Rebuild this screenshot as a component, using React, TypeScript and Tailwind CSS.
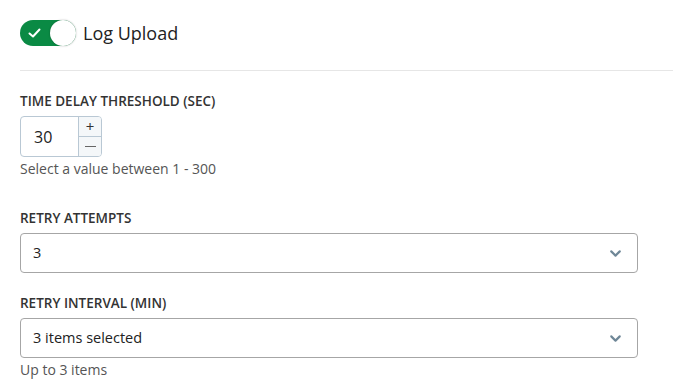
import React from 'react';
import { ChevronDown } from 'lucide-react';

const Label: React.FC<{ children: React.ReactNode; className?: string }> = ({ children, className = '' }) => (
  <div className={`text-[13.5px] leading-[18px] font-semibold text-[#333333] ${className}`}>{children}</div>
);

const Select: React.FC<{ value: string }> = ({ value }) => (
  <div className="mt-[6px] h-[40px] w-[618px] flex items-center justify-between rounded-[4px] border border-[#a6a6a6] bg-white pl-[12px] pr-[13px]">
    <span className="text-[14.5px] text-[#222222]">{value}</span>
    <ChevronDown className="w-[17px] h-[17px] text-[#6f8797]" strokeWidth={3} />
  </div>
);

export default function App() {
  return (
    <div className="min-h-screen bg-white pl-5 pt-5 font-['Open_Sans',sans-serif]">
      <div className="flex items-center h-[26px] gap-[7px]">
        <div className="relative w-[56px] h-[26px] rounded-full bg-[#0a8a44]">
          <svg className="absolute left-[8px] top-[7px] w-[13px] h-[12px]" viewBox="0 0 13 12" fill="none">
            <path d="M1.5 6.5 L5 9.5 L11.5 2.5" stroke="white" strokeWidth="2" strokeLinecap="round" strokeLinejoin="round" />
          </svg>
          <div className="absolute right-[0px] top-[0px] w-[26px] h-[26px] rounded-full bg-white shadow-[0_0_2px_rgba(0,0,0,0.3)]" />
        </div>
        <span className="text-[18px] text-[#222222]">Log Upload</span>
      </div>

      <div className="mt-[24px] h-px bg-[#e6e6e6]" />

      <Label className="mt-[21px]">TIME DELAY THRESHOLD (SEC)</Label>
      <div className="mt-[6px] flex h-[41px] w-[82px] rounded-[4px] border border-[#b9c8d4] overflow-hidden">
        <div className="flex-1 flex items-center pl-[13px] text-[16px] text-[#222222]">30</div>
        <div className="w-[23px] flex flex-col border-l border-[#b9c8d4] bg-[#f4f7f9]">
          <div className="flex-1 flex items-center justify-center border-b border-[#b9c8d4] text-[15px] leading-none text-[#333333]">+</div>
          <div className="flex-1 flex items-center justify-center">
            <div className="w-[11px] h-[1.5px] bg-[#666666]" />
          </div>
        </div>
      </div>
      <div className="mt-[3px] text-[14px] leading-[18px] text-[#555555]">Select a value between 1 - 300</div>

      <Label className="mt-[31px]">RETRY ATTEMPTS</Label>
      <Select value="3" />

      <Label className="mt-[21px]">RETRY INTERVAL (MIN)</Label>
      <Select value="3 items selected" />
      <div className="mt-[3px] text-[14px] leading-[18px] text-[#555555]">Up to 3 items</div>
    </div>
  );
}
